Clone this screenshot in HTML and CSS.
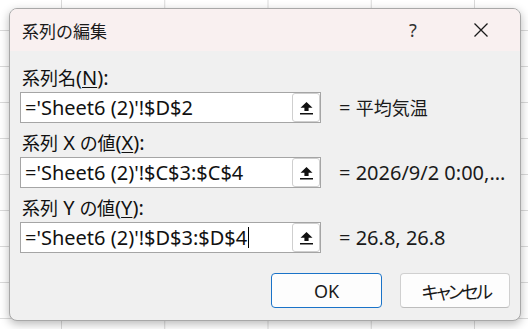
FILE: index.html
```html
<!DOCTYPE html>
<html lang="ja">
<head>
<meta charset="utf-8">
<link rel="stylesheet" href="styles.css">
</head>
<body>
<div class="sheet">
  <div class="dialog">
    <div class="titlebar">
      <span class="title">系列の編集</span>
      <span class="help">?</span>
      <span class="close"><svg width="16" height="16" viewBox="0 0 16 16"><path d="M1.5 1.5 L14.5 14.5 M14.5 1.5 L1.5 14.5" stroke="#1a1a1a" stroke-width="1.3" fill="none"/></svg></span>
    </div>
    <div class="content">
      <div class="field">
        <div class="label"><span class="jp">系列名</span>(<u>N</u>):</div>
        <div class="row">
          <div class="input"><span class="value">='Sheet6 (2)'!$D$2</span><span class="refbtn"><svg width="15" height="14" viewBox="0 0 15 14"><path d="M7.5 1 L13.5 6.8 L9.6 6.8 L9.6 10 L5.4 10 L5.4 6.8 L1.5 6.8 Z" fill="#111"/><rect x="1" y="12" width="13" height="1.5" fill="#111"/></svg></span></div>
          <span class="result">= <span class="jp">平均気温</span></span>
        </div>
      </div>
      <div class="field">
        <div class="label"><span class="jp">系列</span> X <span class="jp">の値</span>(<u>X</u>):</div>
        <div class="row">
          <div class="input"><span class="value">='Sheet6 (2)'!$C$3:$C$4</span><span class="refbtn"><svg width="15" height="14" viewBox="0 0 15 14"><path d="M7.5 1 L13.5 6.8 L9.6 6.8 L9.6 10 L5.4 10 L5.4 6.8 L1.5 6.8 Z" fill="#111"/><rect x="1" y="12" width="13" height="1.5" fill="#111"/></svg></span></div>
          <span class="result">= 2026/9/2 0:00,...</span>
        </div>
      </div>
      <div class="field">
        <div class="label"><span class="jp">系列</span> Y <span class="jp">の値</span>(<u>Y</u>):</div>
        <div class="row">
          <div class="input"><span class="value">='Sheet6 (2)'!$D$3:$D$4<span class="caret"></span></span><span class="refbtn"><svg width="15" height="14" viewBox="0 0 15 14"><path d="M7.5 1 L13.5 6.8 L9.6 6.8 L9.6 10 L5.4 10 L5.4 6.8 L1.5 6.8 Z" fill="#111"/><rect x="1" y="12" width="13" height="1.5" fill="#111"/></svg></span></div>
          <span class="result">= 26.8, 26.8</span>
        </div>
      </div>
      <div class="buttons">
        <button class="btn primary">OK</button>
        <button class="btn"><span class="jp narrow">キャンセル</span></button>
      </div>
    </div>
  </div>
</div>
</body>
</html>
```
FILE: styles.css
```css
* { box-sizing: border-box; }
html, body { margin: 0; padding: 0; }
body {
  width: 528px;
  height: 329px;
  overflow: hidden;
  font-family: "Noto Sans", "Noto Sans CJK JP", sans-serif;
  color: #1a1a1a;
}
.jp { font-family: "Noto Sans CJK JP", sans-serif; font-size: 18px; font-feature-settings: "palt" 1; }
.jp.narrow { letter-spacing: -2.6px; padding-left: 2px; }
.sheet {
  width: 528px;
  height: 329px;
  padding: 8px 0 0 9px;
  background-color: #ffffff;
  background-image:
    linear-gradient(to right, #dadada 1px, transparent 1px),
    linear-gradient(to bottom, #dadada 1px, transparent 1px);
  background-size: 103.25px 100%, 100% 36px;
  background-position: 61px 0, 0 30px;
}
.dialog {
  width: 512px;
  height: 313px;
  border: 1px solid #a8a8a8;
  border-radius: 8px;
  overflow: hidden;
  background: #f0f0f0;
  box-shadow: 0 3px 10px rgba(0,0,0,0.28);
}
.titlebar {
  height: 42px;
  background: #f9f0f0;
  display: flex;
  align-items: center;
}
.title {
  padding-left: 12px;
  font-size: 17px;
  font-family: "Noto Sans CJK JP", sans-serif;
  color: #1a1a1a;
}
.help {
  margin-left: auto;
  width: 46px;
  text-align: center;
  font-size: 18px;
  color: #333;
}
.close {
  width: 46px;
  margin-left: 22px;
  margin-right: 16px;
  display: flex;
  justify-content: center;
  align-items: center;
}
.content {
  padding: 14px 10px 12px 10px;
}
.field {
  margin-bottom: 7px;
}
.label {
  height: 24px;
  line-height: 24px;
  padding-left: 2px;
  font-size: 20px;
  margin-bottom: 3px;
  color: #111;
  white-space: nowrap;
}
.label u { text-underline-offset: 2px; text-decoration-thickness: 1px; }
.row {
  display: flex;
  align-items: center;
  height: 31px;
}
.input {
  width: 301px;
  height: 31px;
  border: 1px solid #a5a5a5;
  background: #fff;
  display: flex;
  align-items: center;
}
.value {
  flex: 1;
  padding-left: 4px;
  font-size: 20px;
  color: #111;
  white-space: nowrap;
  display: flex;
  align-items: center;
}
.caret {
  display: inline-block;
  width: 1px;
  height: 21px;
  background: #000;
  margin-left: 1px;
}
.refbtn {
  width: 28px;
  height: 29px;
  border: 1px solid #cfcfcf;
  border-radius: 3px;
  background: #fff;
  display: flex;
  align-items: center;
  justify-content: center;
}
.result {
  margin-left: 18px;
  font-size: 20px;
  color: #1a1a1a;
  white-space: nowrap;
}
.buttons {
  display: flex;
  justify-content: flex-end;
  gap: 18px;
  margin-top: 20px;
}
.btn {
  width: 110px;
  height: 35px;
  border: 1px solid #d0d0d0;
  border-bottom-color: #bdbdbd;
  border-radius: 4px;
  background: #fdfdfd;
  font-family: "Noto Sans", "Noto Sans CJK JP", sans-serif;
  font-size: 18px;
  color: #1a1a1a;
  padding: 0;
}
.btn.primary {
  width: 111px;
  border: 1px solid #1a73c8;
}
```
